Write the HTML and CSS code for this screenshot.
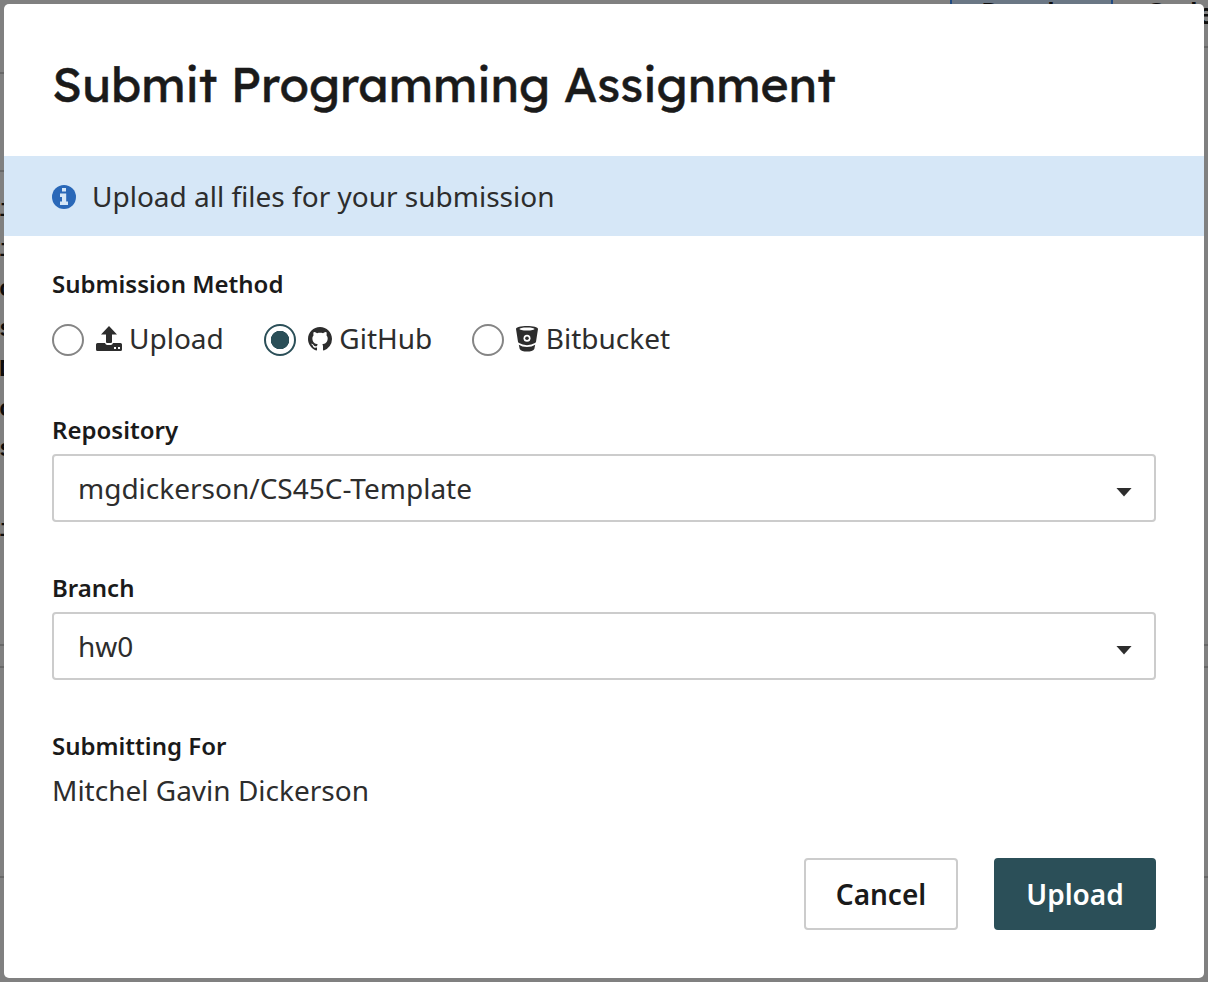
FILE: index.html
```html
<!DOCTYPE html>
<html lang="en">
<head>
<meta charset="utf-8">
<title>Submit Programming Assignment</title>
<link rel="stylesheet" href="styles.css">
</head>
<body>
<div class="page" aria-hidden="true">
  <div class="rule rule-right rule-toolbar"></div>
  <div class="rule rule-left rule-header"></div>
  <div class="rule rule-left rule-section"></div>
  <div class="rule rule-panel"></div>
  <div class="rule rule-panel-end"></div>
  <div class="rule rule-footer"></div>
  <div class="tabs"><span class="tab tab-active">Results</span><span class="tab">Code</span></div>
  <pre class="source">i
i
c
s
D
c
s

i</pre>
</div>
<main class="modal" role="dialog" aria-labelledby="title">
  <h1 class="title" id="title">Submit Programming Assignment</h1>
  <div class="notice">
    <svg class="info" viewBox="0 0 24 24"><circle cx="12" cy="12" r="12" fill="#2a68b8"/><path fill="#d6e7f7" d="M10 3h4v3.600h-4zM8 8.500h6.200V16.500H16V20H8v-3.500h2V12H8z"/></svg>
    <span class="notice-text">Upload all files for your submission</span>
  </div>
  <form class="form">
    <h2 class="label">Submission Method</h2>
    <div class="methods">
      <label class="method"><span class="radio"></span><svg class="icon icon-upload" viewBox="0 0 26 26"><path fill="currentColor" d="M13 0l8 8.500h-5V16q0 1-1 1h-4q-1 0-1-1V8.500H5zM1.500 17H9q.7 2 2.200 2h3.600q1.500 0 2.200-2h7.500q1.500 0 1.500 1.500v5q0 1.500-1.500 1.500h-23Q0 25 0 23.500v-5Q0 17 1.500 17zM18 21v2h2v-2zm4 0v2h2v-2z"/></svg><span class="method-name">Upload</span></label>
      <label class="method"><span class="radio radio-on"></span><svg class="icon icon-github" viewBox="0 0 16 16"><path fill="currentColor" d="M8 0C3.580 0 0 3.580 0 8c0 3.540 2.290 6.530 5.470 7.590.4.070.55-.17.55-.38 0-.19-.01-.82-.01-1.490-2.010.37-2.530-.49-2.690-.94-.09-.23-.48-.94-.82-1.130-.28-.15-.68-.52-.01-.53.63-.01 1.080.58 1.230.82.72 1.210 1.870.87 2.330.66.070-.52.28-.87.51-1.070-1.780-.2-3.640-.89-3.640-3.950 0-.87.31-1.590.82-2.150-.08-.2-.36-1.020.08-2.120 0 0 .67-.21 2.200.82.64-.18 1.320-.27 2-.27s1.360.09 2 .27c1.530-1.040 2.200-.82 2.200-.82.44 1.100.16 1.920.08 2.120.51.56.82 1.270.82 2.150 0 3.070-1.870 3.750-3.650 3.950.29.25.54.73.54 1.480 0 1.070-.01 1.930-.01 2.200 0 .21.15.46.55.38A8.010 8.010 0 0 0 16 8c0-4.420-3.580-8-8-8z"/></svg><span class="method-name">GitHub</span></label>
      <label class="method"><span class="radio"></span><svg class="icon icon-bitbucket" viewBox="0 0 22 26"><path fill="currentColor" fill-rule="evenodd" d="M11 0C5 0 0 1 0 3l2 12.800Q2.200 16.600 3 17.100Q6.500 19.200 11 19.200T19 17.100Q19.800 16.600 20 15.800L22 3c0-2-5-3-11-3zm0 1.500c4.500 0 7.500.6 7.500 1.500S15.500 4.500 11 4.500 3.500 3.900 3.500 3s3-1.500 7.500-1.500zM2.800 18.700Q6 21 11 21t8.200-2.300l-.9 4.200Q16.500 25.500 11 25.500T3.700 22.900z"/><circle cx="11" cy="12.200" r="3.500" fill="#fff"/><circle cx="11" cy="12.200" r="1.800" fill="currentColor"/></svg><span class="method-name">Bitbucket</span></label>
    </div>
    <h2 class="label">Repository</h2>
    <div class="select"><span>mgdickerson/CS45C-Template</span><span class="caret"></span></div>
    <h2 class="label">Branch</h2>
    <div class="select"><span>hw0</span><span class="caret"></span></div>
    <h2 class="label">Submitting For</h2>
    <p class="person">Mitchel Gavin Dickerson</p>
    <div class="actions"><button class="button" type="button">Cancel</button><button class="button button-primary" type="button">Upload</button></div>
  </form>
</main>
</body>
</html>
```
FILE: styles.css
```css
* { box-sizing: border-box; }
body {
  margin: 0;
  width: 1208px;
  height: 982px;
  padding: 4px;
  overflow: hidden;
  position: relative;
  background: #808080;
  color: #2d2d2d;
  font: 28px/40px "Noto Sans", sans-serif;
}
h1, h2, p { margin: 0; }
.page { position: absolute; inset: 0; overflow: hidden; color: #0d0d0d; }
.rule { position: absolute; left: 0; right: 0; height: 2px; background: #686868; }
.rule-left { right: 50%; }
.rule-right { left: 50%; }
.rule-toolbar { top: 46px; }
.rule-header { top: 72px; }
.rule-section { top: 170px; }
.rule-panel { top: 644px; }
.rule-panel-end { top: 666px; }
.rule-footer { top: 876px; }
.tabs { position: absolute; top: -7px; left: 950px; display: flex; font-weight: 600; line-height: 40px; }
.tab { width: 163px; padding-left: 29px; white-space: nowrap; }
.tab + .tab { padding-left: 32px; }
.tab-active { border: solid #204a80; border-width: 0 2px; background: #6b7785; }
.source { position: absolute; top: 190px; left: -1px; margin: 0; font: bold 24px/40px "Liberation Mono", monospace; }
.modal { position: relative; height: 974px; border-radius: 5px; background: #fff; overflow: hidden; }
.title {
  height: 152px;
  padding: 50px 48px 0;
  color: #1a1a1a;
  font: 400 48px/60px Lexend, Inter, sans-serif;
  -webkit-text-stroke: .5px #1a1a1a;
  white-space: nowrap;
}
.notice { display: flex; align-items: center; gap: 16px; height: 80px; padding: 2px 48px 0; background: #d6e7f7; }
.notice-text { margin-top: -2px; }
.info { width: 24px; height: 24px; }
.form { padding: 32px 48px 0; }
.label { height: 34px; color: #1a1a1a; font-size: 24px; font-weight: 600; line-height: 32px; }
.methods { display: flex; gap: 40px; height: 32px; margin: 22px 0 58px; align-items: center; }
.method { display: flex; align-items: center; }
.method-name { margin-top: -4px; }
.radio { width: 32px; height: 32px; margin-right: 12px; border: 2px solid #858585; border-radius: 50%; }
.radio-on { border-color: #2b4f58; background: radial-gradient(circle, #2b4f58 9px, #fff 9.500px); }
.icon { margin-top: -2px; margin-right: 7.500px; }
.icon-upload { width: 26px; height: 26px; margin-right: 7px; }
.icon-github { width: 24px; height: 24px; }
.icon-bitbucket { width: 22px; height: 26px; }
.select {
  display: flex;
  align-items: center;
  justify-content: space-between;
  height: 68px;
  margin: 6px 0 50px;
  padding: 0 22px 0 24px;
  border: 2px solid #ccc;
  border-radius: 4px;
}
.caret { width: 16px; height: 9px; margin-top: 8px; background: #2d2d2d; clip-path: polygon(0 0, 100% 0, 50% 100%); }
.person { margin-top: 6px; }
.actions { display: flex; justify-content: flex-end; gap: 36px; margin-top: 48px; }
.button { width: 154px; height: 72px; padding: 0; border: 2px solid #ccc; border-radius: 4px; background: #fff; color: #1a1a1a; font: 600 28px/40px "Noto Sans", sans-serif; }
.button-primary { width: 162px; border-color: #2b4f58; background: #2b4f58; color: #fff; }
```
